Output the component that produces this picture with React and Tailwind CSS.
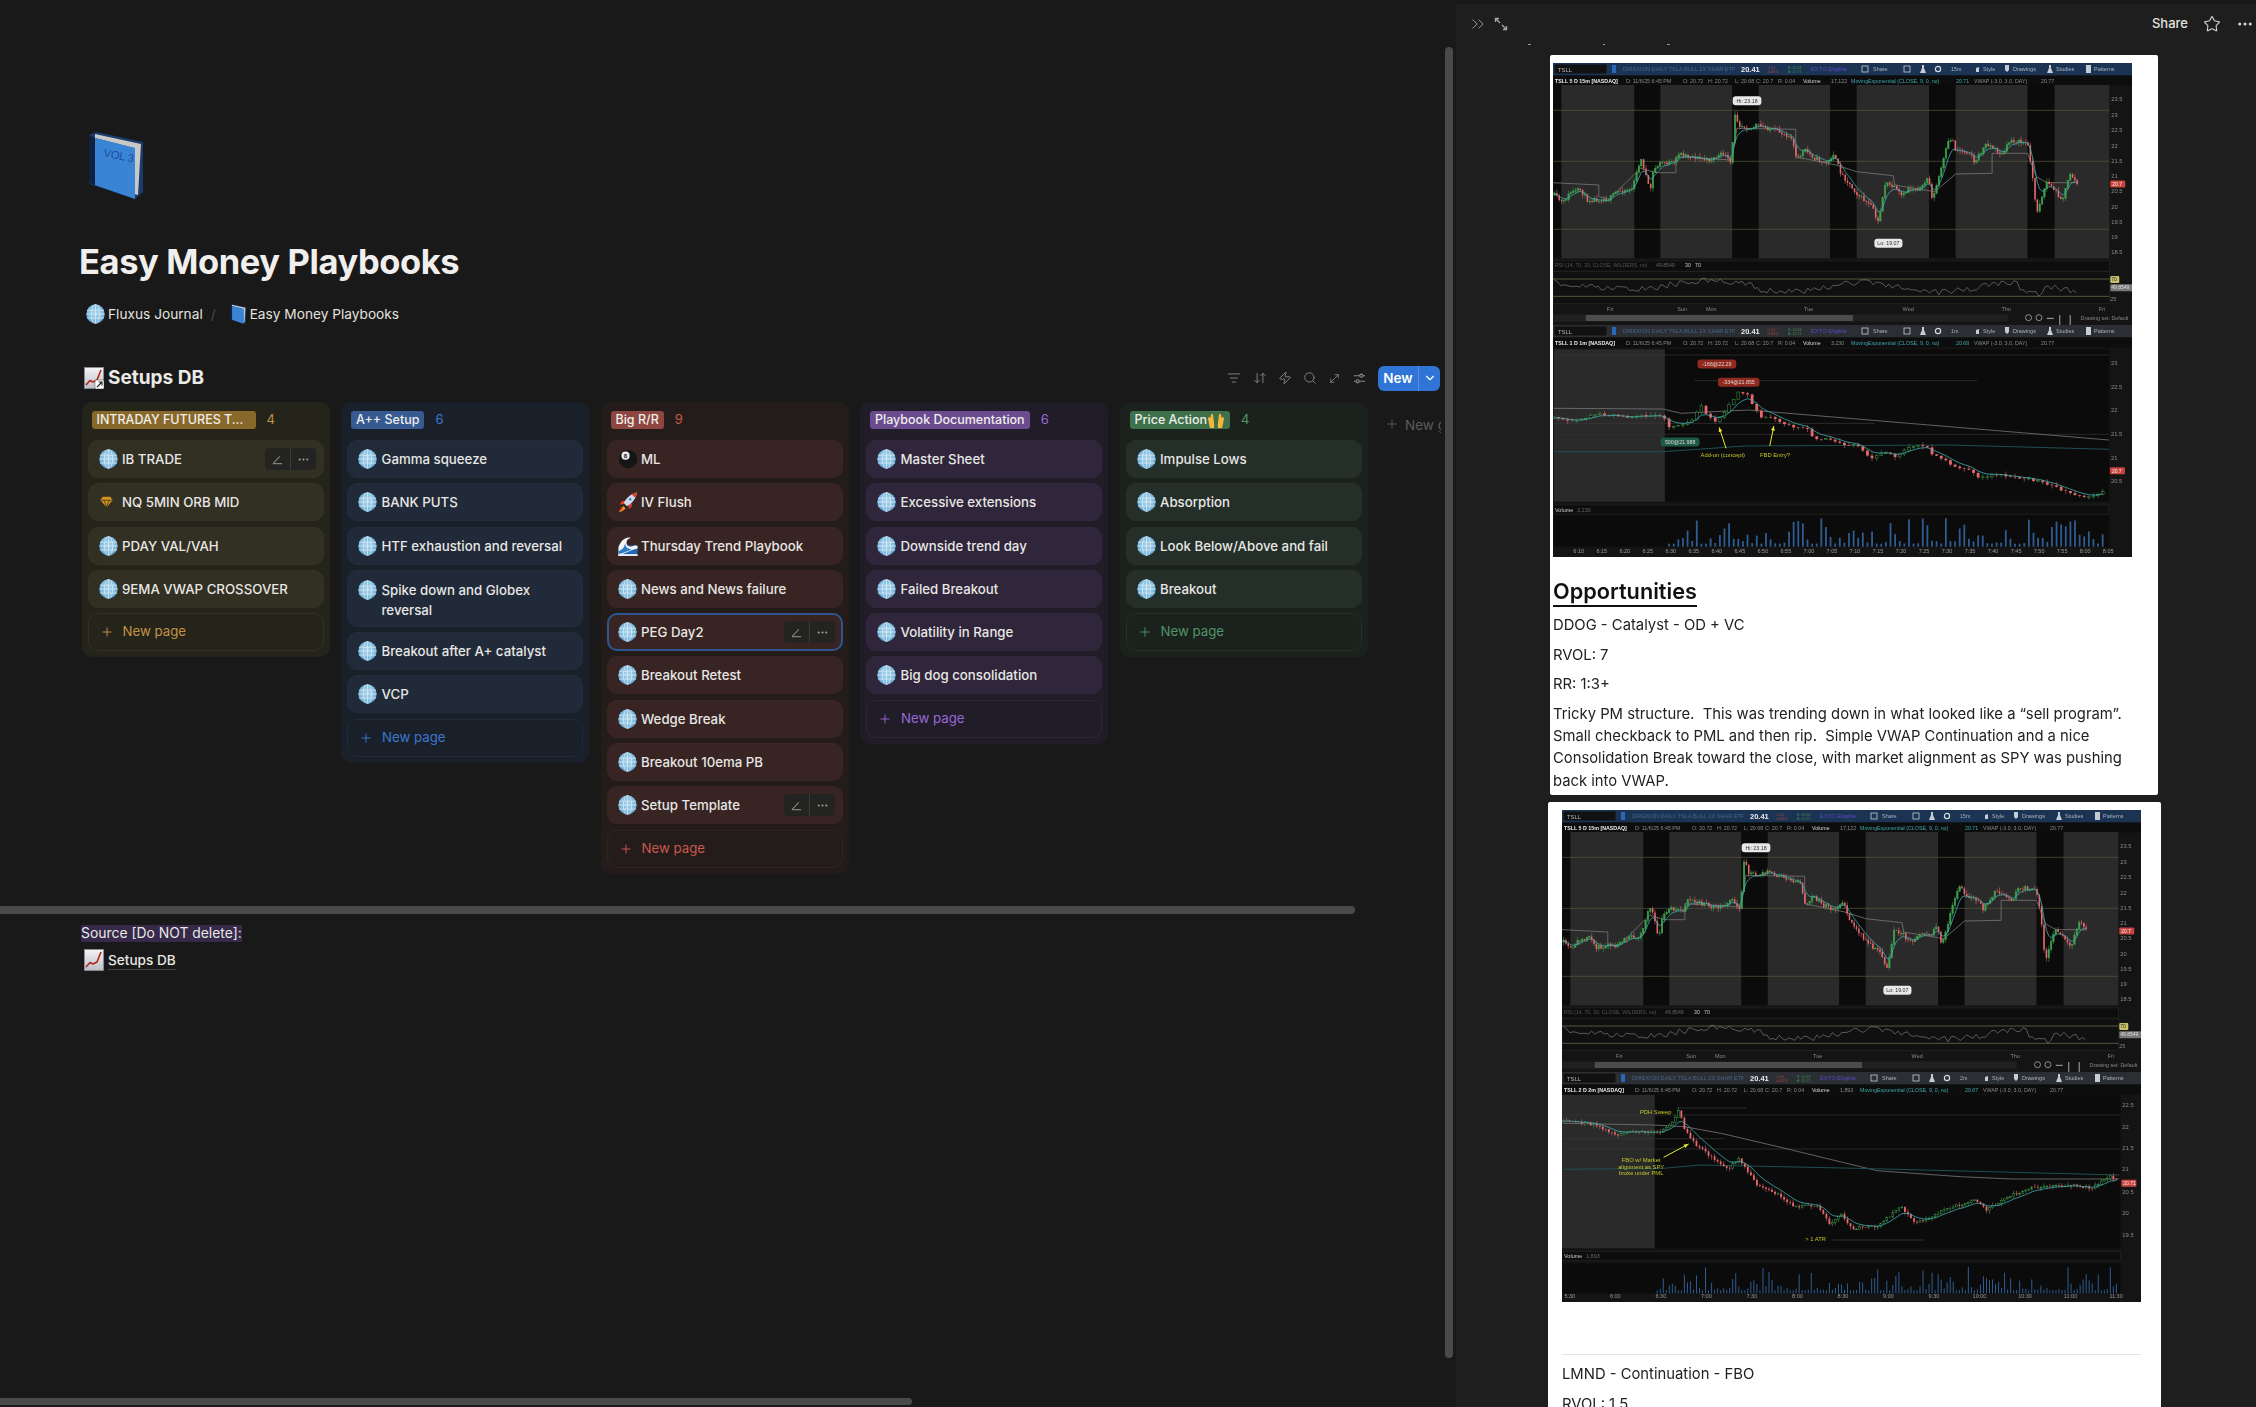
import React from "react";
import { ListFilter, ArrowDownUp, Zap, Search, MoveDiagonal, ChevronDown, ChevronsRight, Star, Ellipsis, Plus } from "lucide-react";

/* ---------- emoji-like drawings ---------- */
const Globe = () => (
  <svg viewBox="0 0 20 21" className="w-[19px] h-[20px] shrink-0">
    <defs>
      <radialGradient id="glb" cx="50%" cy="45%" r="60%">
        <stop offset="0%" stopColor="#a9d4ec" />
        <stop offset="70%" stopColor="#7fbbdf" />
        <stop offset="100%" stopColor="#3f86ba" />
      </radialGradient>
    </defs>
    <ellipse cx="10" cy="10.5" rx="9.7" ry="10.2" fill="url(#glb)" />
    <g fill="none" stroke="#e6f0f5" strokeWidth="0.9" opacity="0.8">
      <ellipse cx="10" cy="10.5" rx="4.4" ry="10" />
      <path d="M10 .5v20M1 6.5h18M.4 10.5h19.2M1 14.8h18" />
    </g>
  </svg>
);

const Book = ({ small }) => (
  <svg viewBox="0 0 55 67" className={small ? "w-[16px] h-[20px] shrink-0" : "w-[55px] h-[67px] shrink-0"}>
    <path d="M1 3 8 0l47 10v50l-8 7L1 52Z" fill="#1b3b6d" />
    <path d="M7 2 53 12 50 63 46 62 46 16 7 6Z" fill="#c8c8c6" />
    <path d="M7 6 47 16v51L7 53Z" fill="#3a84d6" />
    <path d="M1 3 7 6v47L1 51Z" fill="#11203c" />
    {!small && (
      <g fill="#1b4f96" transform="rotate(12 14 24)">
        <text x="15" y="24" fontSize="11" fontFamily="Liberation Sans, sans-serif">VOL 3</text>
      </g>
    )}
  </svg>
);

const ChartEmoji = ({ shortcut }) => (
  <svg viewBox="0 0 20 22" className="w-[20px] h-[22px] shrink-0">
    <defs>
      <linearGradient id="pap" x1="0" y1="0" x2="0" y2="1">
        <stop offset="0%" stopColor="#f4f4f6" />
        <stop offset="100%" stopColor="#bcbfc6" />
      </linearGradient>
    </defs>
    <rect x="0.5" y="0.5" width="19" height="21" fill="url(#pap)" stroke="#8d9098" strokeWidth="0.8" />
    <path d="M2 18 6 13.5 9 15 13 13 17 3" fill="none" stroke="#b3261e" strokeWidth="1.6" strokeLinejoin="round" />
    {shortcut && (
      <g>
        <rect x="11" y="13" width="9" height="9" rx="1.5" fill="#fff" stroke="#444" strokeWidth="0.5" />
        <path d="M13 20 18 15M14.6 15H18v3.4" stroke="#222" strokeWidth="1.1" fill="none" />
      </g>
    )}
  </svg>
);

const EightBall = () => (
  <svg viewBox="0 0 20 21" className="w-[20px] h-[20px] shrink-0">
    <circle cx="10" cy="10.5" r="9.7" fill="#151515" />
    <circle cx="7.4" cy="7" r="4.3" fill="#e9e9e9" />
    <text x="7.4" y="9.4" textAnchor="middle" fontSize="6.4" fontWeight="700" fill="#111" fontFamily="Liberation Sans, sans-serif">8</text>
  </svg>
);

const Rocket = () => (
  <svg viewBox="0 0 20 21" className="w-[20px] h-[20px] shrink-0">
    <path d="M5 15C3 17 1.500 19 .5 21c3-.5 5.500-2 7-4Z" fill="#f6a21c" />
    <path d="M3 16 1 20l4-2Z" fill="#e33d23" />
    <path d="M7 9 3 10 1.500 13 6 12.500ZM11 13.500 10.500 18l3-2 1-4Z" fill="#e23b2c" />
    <path d="M19.500 .5C14 1.500 9 5 5.500 11.500l3.500 3.500C15 11.500 18.500 6.500 19.500 .5Z" fill="#cfd8e6" />
    <path d="M19.500 .5c-2 .3-4 1-5.500 2l3.500 3.500c1-1.800 1.700-3.500 2-5.500Z" fill="#e23b2c" />
    <circle cx="12.300" cy="7.700" r="1.800" fill="#2f7fc4" stroke="#f3f3f3" strokeWidth=".7" />
  </svg>
);

const Wave = () => (
  <svg viewBox="0 0 20 21" className="w-[20px] h-[20px] shrink-0">
    <rect x="0" y="10" width="20" height="11" fill="#1f69b8" />
    <path d="M0 21V12C2 5 8 0 13 2c-3 .5-5 3-4.500 6 .5 3 4 4 7 2.500 1.500-.7 3-.7 4.500 0V13c-6 1.500-9 3-20 8Z" fill="#f2f5f8" />
    <path d="M0 16c4-1 6-4 7-8 .5 4 3 6 7 6-4 2-9 4-14 5Z" fill="#2d7cc8" />
    <path d="M0 19h20v2H0Z" fill="#e9eef4" />
  </svg>
);

const Gem = () => (
  <svg viewBox="0 0 16 14" className="w-[15px] h-[12px] shrink-0">
    <path d="M3.500 .8h9L15.200 5 8 13.200.8 5Z" fill="#cf9122" />
    <path d="M1 5h14M5 5l3 8 3-8" stroke="#33301f" strokeWidth=".8" fill="none" />
  </svg>
);

const Hands = () => (
  <svg viewBox="0 0 18 18" className="w-[18px] h-[18px] shrink-0">
    <path d="M1 7c1-1.500 2-1.500 2.500 0L4 3.500c.5-1 1.500-1 2 0l.5 4 .7 6.500L7 17H3l-1-4Z" fill="#f5b63b" />
    <path d="M17 7c-1-1.500-2-1.500-2.500 0L14 3.500c-.5-1-1.500-1-2 0l-.5 4-.7 6.500.2 3h4l1-4Z" fill="#f5b63b" />
    <path d="M6 1 6.400 0M9 1V0M12 1l-.4-1" stroke="#9a9a8a" strokeWidth=".6" />
  </svg>
);

const ICONS = { globe: Globe, ball: EightBall, rocket: Rocket, wave: Wave, gem: Gem };

/* ---------- board ---------- */
const ActionBox = () => (
  <div className="ml-auto flex h-[22px] w-[51px] rounded-[4px] bg-[#232322] shrink-0">
    <div className="flex flex-1 items-center justify-center border-r border-[#3a3a38]">
      <svg viewBox="0 0 14 12" className="w-[13px] h-[11px]">
        <path d="M2 10.500h10M2 10.500 9.500 2.500" fill="none" stroke="#7f7f7b" strokeWidth="1.200" />
      </svg>
    </div>
    <div className="flex flex-1 items-center justify-center">
      <Ellipsis className="w-[13px] h-[13px] text-[#9c9c98]" strokeWidth={2} />
    </div>
  </div>
);

const COLUMNS = [
  {
    name: "INTRADAY FUTURES T...", count: 4,
    col: "bg-[#25241b]", card: "bg-[#322f23] border-[#343125]", pill: "bg-[#89692b] w-[164px]", accent: "text-[#c29343]", line: "border-[#322f24]",
    items: [["globe", "IB TRADE", "act"], ["gem", "NQ 5MIN ORB MID"], ["globe", "PDAY VAL/VAH"], ["globe", "9EMA VWAP CROSSOVER"]],
  },
  {
    name: "A++ Setup", count: 6,
    col: "bg-[#1a2029]", card: "bg-[#202a39] border-[#222c3b]", pill: "bg-[#365a91]", accent: "text-[#3a77d0]", line: "border-[#202a39]",
    items: [["globe", "Gamma squeeze"], ["globe", "BANK PUTS"], ["globe", "HTF exhaustion and reversal"], ["globe", "Spike down and Globex reversal"], ["globe", "Breakout after A+ catalyst"], ["globe", "VCP"]],
  },
  {
    name: "Big R/R", count: 9,
    col: "bg-[#241c1a]", card: "bg-[#372423] border-[#392625]", pill: "bg-[#8e4740]", accent: "text-[#c9584d]", line: "border-[#332422]",
    items: [["ball", "ML"], ["rocket", "IV Flush"], ["wave", "Thursday Trend Playbook"], ["globe", "News and News failure"], ["globe", "PEG Day2", "act", "sel"], ["globe", "Breakout Retest"], ["globe", "Wedge Break"], ["globe", "Breakout 10ema PB"], ["globe", "Setup Template", "act"]],
  },
  {
    name: "Playbook Documentation", count: 6,
    col: "bg-[#201c28]", card: "bg-[#2f263b] border-[#31283d]", pill: "bg-[#6a4b90]", accent: "text-[#9a68d6]", line: "border-[#2d2539]",
    items: [["globe", "Master Sheet"], ["globe", "Excessive extensions"], ["globe", "Downside trend day"], ["globe", "Failed Breakout"], ["globe", "Volatility in Range"], ["globe", "Big dog consolidation"]],
  },
  {
    name: "Price Action", hands: true, count: 4,
    col: "bg-[#1b211d]", card: "bg-[#252f2a] border-[#27312c]", pill: "bg-[#3e7149]", accent: "text-[#4f9666]", line: "border-[#252e29]",
    items: [["globe", "Impulse Lows"], ["globe", "Absorption"], ["globe", "Look Below/Above and fail"], ["globe", "Breakout"]],
  },
];

const Card = ({ item, c }) => {
  const [icon, label, act, sel] = item;
  const Ic = ICONS[icon];
  const two = label.startsWith("Spike");
  return (
    <div className={`flex ${two ? "h-[57px] items-start pt-[9px]" : "h-[38px] items-center"} rounded-[10px] border ${sel ? "border-[#2f5694] border-2 pl-[9px] pr-[6px]" : `${c.card.split(" ")[1]} pl-[10px] pr-[7px]`} ${c.card.split(" ")[0]}`}>
      <span className="flex w-[23.5px] justify-start shrink-0"><Ic /></span>
      <span className={`text-[13.25px] leading-[20px] font-medium text-[#e8e7e4] ${two ? "pr-[30px]" : "whitespace-nowrap"}`}>{label}</span>
      {act && <ActionBox />}
    </div>
  );
};

const Column = ({ c }) => (
  <div className={`w-[248px] shrink-0 rounded-[10px] px-[6px] pt-[9px] pb-[6px] ${c.col}`}>
    <div className="mb-[11px] flex h-[18px] items-center pl-[4px]">
      <span className={`flex h-[18px] items-center rounded-[3px] px-[5px] text-[12.5px] font-medium leading-[18px] text-[#efeeea] whitespace-nowrap ${c.pill}`}>
        {c.name}{c.hands && <Hands />}
      </span>
      <span className={`ml-[11px] text-[13px] ${c.accent}`}>{c.count}</span>
    </div>
    <div className="flex flex-col gap-[5.3px]">
      {c.items.map((it) => <Card key={it[1]} item={it} c={c} />)}
      <div className={`flex h-[38px] items-center rounded-[10px] border pl-[11px] ${c.line}`}>
        <Plus className={`w-[14px] h-[14px] mr-[9px] ${c.accent}`} strokeWidth={1.6} />
        <span className={`text-[13.25px] ${c.accent}`}>New page</span>
      </div>
    </div>
  </div>
);

const Sliders = () => (
  <svg viewBox="0 0 14 14" className="w-[13px] h-[13px]" fill="none" stroke="#8b8b88" strokeWidth="1.200">
    <path d="M1 4h12M1 10h12" />
    <circle cx="9" cy="4" r="1.700" fill="#191919" />
    <circle cx="5" cy="10" r="1.700" fill="#191919" />
  </svg>
);

/* ---------- trading charts ---------- */
const rng = (seed) => { let s = seed; return () => { s = (s * 16807) % 2147483647; return (s - 1) / 2147483646; }; };
const at = (pts, x) => {
  for (let i = 1; i < pts.length; i++) {
    if (x <= pts[i][0]) {
      const [a, b] = pts[i - 1]; const [c, d] = pts[i];
      return b + ((d - b) * (x - a)) / (c - a || 1);
    }
  }
  return pts[pts.length - 1][1];
};
const mkCandles = (pts, step, seed, noise, wick) => {
  const r = rng(seed); const out = []; let prev = pts[0][1];
  for (let x = pts[0][0]; x <= pts[pts.length - 1][0]; x += step) {
    const c = at(pts, x) + (r() - 0.5) * noise;
    out.push({ x, o: prev, c, h: Math.min(prev, c) - r() * wick, l: Math.max(prev, c) + r() * wick });
    prev = c;
  }
  return out;
};
const poly = (pts, X, Y) => pts.map(([a, b]) => `${X(a).toFixed(1)},${Y(b).toFixed(1)}`).join(" ");

const Toolbar = ({ tone, tf, head, vol, ema, vw }) => (
  <g>
    <rect x="0" y="0" width="579" height="12.500" fill={tone} />
    <rect x="1.500" y="1.500" width="52" height="9" fill="#111" />
    <text x="5" y="8.500" fontSize="5.800" fill="#b5b5b5">TSLL</text>
    <rect x="59" y="2" width="4" height="8" fill="#2a67b8" />
    <text x="70" y="8.300" fontSize="5.600" fill="#476488">DIREXION DAILY TSLA BULL 2X SHAR ETF</text>
    <text x="188" y="9" fontSize="7.500" fontWeight="700" fill="#eee">20.41</text>
    <text x="214" y="5.500" fontSize="3.600" fill="#b4443f">-1.51</text>
    <text x="214" y="10" fontSize="3.600" fill="#b4443f">-6.85%</text>
    <text x="235" y="5.500" fontSize="3.600" fill="#3d8d4a">B: 20.64</text>
    <text x="235" y="10" fontSize="3.600" fill="#3d8d4a">A: 20.71</text>
    <text x="258" y="8.300" fontSize="5.800" fill="#5a48c8">EXTO Eligible</text>
    <text x="320" y="8.300" fontSize="5.500" fill="#a9b3bf">Share</text>
    <rect x="309" y="3" width="6" height="6" fill="none" stroke="#c5ccd4" strokeWidth=".8" />
    <rect x="351" y="3" width="6" height="6" fill="none" stroke="#c5ccd4" strokeWidth=".8" />
    <path d="M369 2h2v3l2 5h-6l2-5Z" fill="#c5ccd4" />
    <circle cx="385" cy="6" r="2.600" fill="none" stroke="#d5dae0" strokeWidth="1.200" />
    <text x="398" y="8.300" fontSize="5.300" fill="#a9b3bf">{tf}</text>
    <text x="430" y="8.300" fontSize="5.500" fill="#a9b3bf">Style</text>
    <text x="460" y="8.300" fontSize="5.500" fill="#a9b3bf">Drawings</text>
    <text x="503" y="8.300" fontSize="5.500" fill="#a9b3bf">Studies</text>
    <text x="541" y="8.300" fontSize="5.500" fill="#a9b3bf">Patterns</text>
    <path d="M423 9v-4l3-1v5ZM452 2v5l2 2 2-2V2ZM496 2h2v3l2 5h-6l2-5ZM533 2h5v8h-5Z" fill="#c5ccd4" />
    <rect x="0" y="12.500" width="579" height="10" fill="#0d0d0d" />
    <g fontSize="5.300" fill="#8a8a8a">
      <text x="2" y="20" fontWeight="700" fill="#eaeaea">{head}</text>
      <text x="73" y="20">D: 11/6/25 6:45 PM</text>
      <text x="130" y="20">O: 20.72</text>
      <text x="155" y="20">H: 20.72</text>
      <text x="182" y="20">L: 20.68</text>
      <text x="203" y="20">C: 20.7</text>
      <text x="225" y="20">R: 0.04</text>
      <text x="250" y="20" fill="#d8d8d8">Volume</text>
      <text x="278" y="20">{vol}</text>
      <text x="298" y="20" fill="#3fa8ad">MovingExponential (CLOSE, 9, 0, no)</text>
      <text x="403" y="20" fill="#3fa8ad">{ema}</text>
      <text x="421" y="20">VWAP (-3.0, 3.0, DAY)</text>
      <text x="488" y="20">{vw}</text>
    </g>
  </g>
);

const Chart = ({ c }) => {
  const X = (z) => (z - c.x0) / c.kx;
  const Y = (z) => (z - c.y0) / 3;
  const P = c.plot;
  const candles = mkCandles(c.path, c.step, c.seed, c.noise, c.wick);
  let e = c.path[0][1];
  const emaPts = candles.map((k) => { e += c.emaK * (k.c - e); return [k.x, e]; });
  const bw = c.bodyW;
  const r = rng(c.seed + 7);
  return (
    <svg viewBox={`0 0 579 ${c.h}`} className="block w-[579px] blur-[0.45px] font-['Liberation_Sans']" style={{ height: c.h }}>
      <rect x="0" y="0" width="579" height={c.h} fill="#141414" />
      <Toolbar tone={c.tone} tf={c.tf} head={c.head} vol={c.vol} ema={c.ema} vw="20.77" />
      <rect x={X(P.l)} y={Y(P.t)} width={X(P.r) - X(P.l)} height={Y(P.b) - Y(P.t)} fill={c.plotBg} />
      {c.shade && <rect x={X(c.shade[0])} y={Y(P.t)} width={X(c.shade[1]) - X(c.shade[0])} height={Y(P.b) - Y(P.t)} fill={c.shadeFill} />}
      {(c.bands || []).map(([a, b]) => <rect key={a} x={X(a)} y={Y(P.t)} width={X(b) - X(a)} height={Y(P.b) - Y(P.t)} fill="#0b0b0b" />)}
      {c.hlines.map(([a, b, y, col]) => <line key={`${a}${y}`} x1={X(a)} x2={X(b)} y1={Y(y)} y2={Y(y)} stroke={col} strokeWidth=".7" />)}
      <polyline points={poly(c.vwap, X, Y)} fill="none" stroke="#77777a" strokeWidth=".8" />
      {c.teal && <polyline points={poly(c.teal, X, Y)} fill="none" stroke="#1f4f52" strokeWidth="1" />}
      {candles.map((k) => {
        const down = k.c > k.o;
        const col = down ? "#e66a6c" : "#3f9f4c";
        const top = Math.min(k.o, k.c);
        const ht = Math.max(Math.abs(k.c - k.o) / 3, 0.5);
        return (
          <g key={k.x}>
            <line x1={X(k.x)} x2={X(k.x)} y1={Y(k.h)} y2={Y(k.l)} stroke={col} strokeWidth=".55" />
            <rect x={X(k.x) - bw / 2} y={Y(top)} width={bw} height={ht} fill={down || !c.hollow ? col : "#0a0a0a"} stroke={down ? "none" : col} strokeWidth=".5" />
          </g>
        );
      })}
      <polyline points={poly(emaPts, X, Y)} fill="none" stroke="#43a9b0" strokeWidth=".8" />
      <g fontSize="5.800" fill="#8b8b8b">
        {c.ylabels.map(([t, y]) => <text key={t} x={X(P.r) + 2} y={Y(y) + 2}>{t}</text>)}
      </g>
      {c.priceBadges.map(([t, y, bg]) => (
        <g key={t}>
          <rect x={X(P.r) + 1} y={Y(y) - 3.500} width="15" height="7" rx="1" fill={bg} />
          <text x={X(P.r) + 3} y={Y(y) + 2} fontSize="5" fill="#eee">{t}</text>
        </g>
      ))}
      {c.badges.map(([t, a, b, y, bg]) => (
        <g key={t}>
          <rect x={X(a)} y={Y(y) - 4.500} width={X(b) - X(a)} height="9" rx="3" fill={bg} />
          <text x={(X(a) + X(b)) / 2} y={Y(y) + 2} textAnchor="middle" fontSize="5.300" fill={c.badgeText}>{t}</text>
        </g>
      ))}
      {c.notes.map(([t, x, y]) => <text key={t} x={X(x)} y={Y(y)} textAnchor="middle" fontSize="5.800" fill="#c5c52a">{t}</text>)}
      {c.arrows.map(([a, b, d, f], i) => {
        const x2 = X(d), y2 = Y(f), x1 = X(a), y1 = Y(b);
        const ang = Math.atan2(y2 - y1, x2 - x1);
        const p = (o) => `${(x2 + 5 * Math.cos(ang + o)).toFixed(1)},${(y2 + 5 * Math.sin(ang + o)).toFixed(1)}`;
        return (
          <g key={i}>
            <line x1={x1} y1={y1} x2={x2} y2={y2} stroke="#e6e62e" strokeWidth="1" />
            <polygon points={`${x2},${y2} ${p(Math.PI * 0.87)} ${p(-Math.PI * 0.87)}`} fill="#e6e62e" />
          </g>
        );
      })}
      {c.kind === "rsi" && (() => {
        const pts = []; const rr = rng(41);
        for (let z = 220; z < 1225; z += 6) pts.push([z, 862 + Math.sin(z / 47) * 14 + (rr() - 0.5) * 18 - (z > 320 && z < 600 ? 8 : 0) + (z > 1110 && z < 1160 ? 30 : 0)]);
        return (
          <g>
            <rect x={X(217)} y={Y(783)} width={X(1285) - X(217)} height={Y(813) - Y(783)} fill="#0d0d0d" stroke="#2b2b2b" strokeWidth=".5" />
            <text x="2" y={Y(800)} fontSize="5.200" fill="#555">RSI (14, 70, 30, CLOSE, WILDERS, no)</text>
            <text x="103" y={Y(800)} fontSize="5.200" fill="#666">49.8549</text>
            <text x="132" y={Y(800)} fontSize="5.200" fill="#ccc">30</text>
            <text x="142" y={Y(800)} fontSize="5.200" fill="#ccc">70</text>
            <rect x={X(217)} y={Y(815)} width={X(1285) - X(217)} height={Y(910) - Y(815)} fill="#101010" stroke="#2b2b2b" strokeWidth=".5" />
            <line x1={X(217)} x2={X(1285)} y1={Y(837)} y2={Y(837)} stroke="#77774a" strokeWidth=".7" />
            <line x1={X(217)} x2={X(1285)} y1={Y(889)} y2={Y(889)} stroke="#77774a" strokeWidth=".7" />
            <polyline points={poly(pts, X, Y)} fill="none" stroke="#8a8a8a" strokeWidth=".6" />
            <rect x={X(1287)} y={Y(828)} width="9" height="7" rx="1" fill="#c9c26a" />
            <text x={X(1289)} y={Y(843)} fontSize="5" fill="#222">70</text>
            <rect x={X(1287)} y={Y(853)} width="22" height="7" rx="1" fill="#777" />
            <text x={X(1289)} y={Y(868)} fontSize="5" fill="#ddd">49.8549</text>
            <text x={X(1287)} y={Y(902)} fontSize="5.500" fill="#888">25</text>
            <g fontSize="5.500" fill="#888" textAnchor="middle">
              {[["Fri", 327], ["Sun", 465], ["Mon", 521], ["Tue", 708], ["Wed", 899], ["Thu", 1087], ["Fri ", 1271]].map(([t, z]) => <text key={t} x={X(z)} y={Y(932)}>{t}</text>)}
            </g>
            <rect x={X(217)} y={Y(943)} width={X(1090) - X(217)} height={Y(965) - Y(943)} fill="#202020" />
            <rect x={X(280)} y={Y(945)} width={X(793) - X(280)} height={Y(963) - Y(945)} fill="#4c4c4c" />
            <circle cx={X(1130)} cy={Y(953)} r="3" fill="none" stroke="#aaa" strokeWidth=".8" />
            <circle cx={X(1150)} cy={Y(953)} r="3" fill="none" stroke="#aaa" strokeWidth=".8" />
            <path d={`M${X(1165)} ${Y(955)}h7M${X(1190)} ${Y(945)}v20M${X(1210)} ${Y(945)}v18`} stroke="#aaa" strokeWidth="1" />
            <text x={X(1230)} y={Y(961)} fontSize="5.300" fill="#888">Drawing set: Default</text>
          </g>
        );
      })()}
      {c.kind === "vol" && (
        <g>
          <rect x={X(P.l)} y={Y(c.volHead)} width={X(P.r) - X(P.l)} height="9" fill="#0d0d0d" stroke="#2b2b2b" strokeWidth=".5" />
          <text x="2" y={Y(c.volHead) + 6.500} fontSize="5.500" fill="#c8c8c8">Volume</text>
          <text x="24" y={Y(c.volHead) + 6.500} fontSize="5.500" fill="#666">{c.volVal}</text>
          <rect x={X(P.l)} y={Y(c.volTop)} width={X(P.r) - X(P.l)} height={Y(c.volBot) - Y(c.volTop)} fill="#0b0b0b" />
          {candles.filter((k) => k.x >= c.volStart).map((k) => {
            const hh = (3 + Math.pow(r(), c.volPow) * 26);
            return <rect key={k.x} x={X(k.x) - c.volW / 2} y={Y(c.volBot) - hh} width={c.volW} height={hh} fill="#2f5d92" />;
          })}
          <g fontSize="5.500" fill="#9a9a9a" textAnchor="middle">
            {c.xlabels.map(([t, z]) => <text key={t} x={X(z)} y={c.h - 4}>{t}</text>)}
          </g>
        </g>
      )}
    </svg>
  );
};

const chartA = (seed, head) => ({
  kind: "rsi", x0: 217, y0: 189, kx: 1.92, h: 262, tone: "#1c3453", tf: "15m", head, vol: "17,122", ema: "20.71",
  plot: { l: 217, r: 1285, t: 255, b: 775 }, plotBg: "#2a2a2a",
  bands: [[217, 233], [373, 423], [561, 612], [749, 800], [939, 990], [1128, 1180]],
  hlines: [[217, 1285, 331, "#56563f"], [217, 1285, 484, "#56563f"], [217, 1285, 688, "#56563f"]],
  path: [[220,585],[236,610],[250,578],[270,570],[283,600],[325,597],[340,575],[370,565],[385,475],[393,510],[403,578],[410,510],[425,487],[450,490],[458,460],[480,468],[515,482],[545,460],[560,495],[565,335],[575,375],[600,385],[607,375],[640,390],[675,410],[685,480],[700,450],[720,475],[745,490],[755,460],[770,520],[800,580],[835,630],[838,685],[845,635],[855,550],[870,560],[888,590],[900,565],[925,565],[937,530],[946,600],[960,520],[975,430],[983,412],[990,450],[1020,458],[1025,490],[1050,430],[1080,465],[1095,420],[1128,430],[1135,490],[1145,640],[1165,545],[1185,580],[1195,600],[1210,520],[1225,555]],
  step: 4.500, seed, noise: 12, wick: 12, bodyW: 1.500, emaK: 0.3,
  vwap: [[217,548],[305,555],[305,590],[325,597],[385,505],[415,518],[453,518],[453,470],[560,480],[570,385],[683,388],[683,470],[760,495],[800,515],[870,527],[873,555],[950,575],[990,522],[1060,520],[1060,460],[1128,460],[1145,530],[1165,548],[1220,548]],
  ylabels: [["23.5",298],["23",344],["22.5",390],["22",437],["21.5",483],["21",528],["20.5",574],["20",620],["19.5",665],["19",711],["18.5",757]],
  priceBadges: [["20.7", 552, "#c9443f"]],
  badges: [["Hi: 23.18", 562, 617, 302, "#e8e8e8"], ["Lo: 19.07", 834, 888, 730, "#e8e8e8"]],
  badgeText: "#333", notes: [], arrows: [],
});

const chartB = {
  kind: "vol", x0: 31, y0: 15, kx: 2.450, h: 232, tone: "#2b2e33", tf: "1m", head: "TSLL 1 D 1m [NASDAQ]", vol: "3,230", ema: "20.69",
  plot: { l: 33, r: 1393, t: 88, b: 545 }, plotBg: "#0b0b0b", shade: [33, 305], shadeFill: "#2a2a2a",
  hlines: [[33,1393,105,"#333"],[33,820,310,"#3a3a3a"],[33,1393,343,"#333"],[378,1070,182,"#3a3a3a"]],
  path: [[33,295],[90,300],[140,283],[220,290],[300,285],[312,320],[340,315],[370,300],[395,255],[412,290],[430,310],[455,270],[485,220],[503,215],[520,255],[545,295],[570,290],[585,305],[620,320],[650,320],[675,360],[710,355],[750,380],[775,370],[790,395],[810,415],[850,395],[870,410],[905,380],[940,375],[960,400],[1010,435],[1060,455],[1070,470],[1140,465],[1240,490],[1310,525],[1340,530],[1385,512]],
  step: 11.300, seed: 77, noise: 8, wick: 10, bodyW: 2.800, emaK: 0.3, hollow: true,
  vwap: [[33,265],[300,267],[345,280],[510,270],[1100,330],[1393,360]],
  teal: [[33,395],[300,395],[500,378],[1000,375],[1393,388]],
  ylabels: [["23",130],["22.5",200],["22",271],["21.5",342],["21",413],["20.5",484]],
  priceBadges: [["20.7", 452, "#c9443f"]],
  badges: [["-166@22.29", 385, 480, 132, "#8f2a20"], ["-334@21.855", 435, 537, 187, "#8f2a20"], ["500@21.988", 295, 390, 366, "#1c5a45"]],
  badgeText: "#e0d5d0",
  notes: [["Add-on (concept)", 447, 410], ["FBD Entry?", 575, 410]],
  arrows: [[455, 385, 438, 322], [562, 378, 572, 318]],
  volHead: 555, volVal: "3,230", volTop: 585, volBot: 680, volStart: 312, volW: 1.800, volPow: 2.4,
  xlabels: Array.from({ length: 24 }, (_, i) => { const m = 370 + i * 5; return [`${Math.floor(m / 60)}:${String(m % 60).padStart(2, "0")}`, 94 + i * 56.400]; }),
};

const chartD = {
  kind: "vol", x0: 235, y0: -84, kx: 1.920, h: 230, tone: "#2b2e33", tf: "2m", head: "TSLL 2 D 2m [NASDAQ]", vol: "1,893", ema: "20.67",
  plot: { l: 235, r: 1307, t: -15, b: 445 }, plotBg: "#0b0b0b", shade: [235, 413], shadeFill: "#2a2a2a",
  hlines: [[235,1307,45,"#333"],[235,545,116,"#3a3a3a"],[235,1307,147,"#333"],[755,930,420,"#444"],[455,590,24,"#3a3a3a"]],
  path: [[238,65],[285,68],[340,105],[375,92],[415,100],[430,90],[445,75],[460,30],[470,90],[490,130],[520,170],[555,205],[575,175],[610,255],[650,285],[680,320],[725,315],[750,375],[770,340],[790,385],[840,380],[885,320],[912,365],[935,360],[975,325],[1030,300],[1050,330],[1100,285],[1140,262],[1215,255],[1250,265],[1285,230],[1305,238]],
  step: 5.800, seed: 133, noise: 8, wick: 10, bodyW: 1.800, emaK: 0.22, hollow: true,
  vwap: [[238,70],[410,75],[470,80],[540,100],[650,140],[840,212],[1000,230],[1100,237],[1305,237]],
  teal: [[238,208],[430,205],[500,195],[800,205],[1305,225]],
  ylabels: [["22.5",15],["22",80],["21.5",145],["21",208],["20.5",277],["20",340],["19.5",405]],
  priceBadges: [["20.71", 250, "#c9443f"]],
  badges: [], badgeText: "#fff",
  notes: [["PDH Sweep", 415, 43], ["FBO w/ Market", 387, 186], ["alignment as SPY", 387, 206], ["broke under PML", 387, 226], ["> 1 ATR", 722, 423]],
  arrows: [[430, 172, 478, 132]],
  volHead: 455, volVal: "1,893", volTop: 490, volBot: 580, volStart: 415, volW: 1, volPow: 3.2,
  xlabels: Array.from({ length: 13 }, (_, i) => { const m = 330 + i * 30; return [`${Math.floor(m / 60)}:${String(m % 60).padStart(2, "0")}`, 250 + i * 87.400]; }),
};

/* ---------- page ---------- */
export default function App() {
  return (
    <div className="flex h-[1407px] w-[2256px] overflow-hidden bg-[#191919] font-['Inter',sans-serif] text-[#e8e7e4]">
      {/* left page */}
      <div className="relative h-full w-[1456px] shrink-0 overflow-hidden">
        <div className="pt-[132px] pl-[88px]"><Book /></div>
        <h1 className="mt-[36.5px] pl-[79px] text-[34.5px] leading-[52px] font-bold tracking-[-0.4px] text-[#f0efed]">Easy Money Playbooks</h1>
        <div className="mt-[14.5px] flex h-[24px] items-center pl-[86px] text-[13.7px] text-[#e3e2df]">
          <Globe />
          <span className="ml-[3px]">Fluxus Journal</span>
          <span className="ml-[8px] mr-[14px] text-[#4a4a48]">/</span>
          <Book small />
          <span className="ml-[4px]">Easy Money Playbooks</span>
        </div>
        <div className="mt-[39.5px] flex h-[25px] items-center pl-[84px] pr-[16px]">
          <ChartEmoji shortcut />
          <span className="ml-[4px] text-[19px] font-bold text-[#ebeae7]">Setups DB</span>
          <div className="ml-auto flex items-center text-[#8b8b88]">
            <ListFilter className="mr-[12px] h-[14px] w-[14px]" strokeWidth={1.500} />
            <ArrowDownUp className="mr-[11px] h-[14px] w-[14px]" strokeWidth={1.500} />
            <Zap className="mr-[11px] h-[14px] w-[14px]" strokeWidth={1.500} />
            <Search className="mr-[11px] h-[14px] w-[14px]" strokeWidth={1.500} />
            <MoveDiagonal className="mr-[12px] h-[13px] w-[13px]" strokeWidth={1.500} />
            <span className="mr-[12px] flex"><Sliders /></span>
            <div className="flex h-[25px] w-[62px] items-center rounded-[6px] bg-[#2f74d6] text-white">
              <span className="flex h-full w-[41px] items-center justify-center border-r border-[#5a8fdd] text-[13.5px] font-semibold">New</span>
              <span className="flex flex-1 items-center justify-center"><ChevronDown className="h-[14px] w-[14px]" strokeWidth={2} /></span>
            </div>
          </div>
        </div>
        <div className="mt-[11.5px] flex h-[490px] w-[1441px] gap-[11.5px] overflow-hidden pl-[81.5px]">
          {COLUMNS.map((c) => <div key={c.name} className="shrink-0"><Column c={c} /></div>)}
          <div className="flex shrink-0 items-start pt-[13px] pl-[6px] text-[13.5px] text-[#5c5c5a] whitespace-nowrap">
            <Plus className="mr-[6px] mt-[2px] h-[14px] w-[14px]" strokeWidth={1.500} />New group
          </div>
        </div>
        <div className="mt-[28px] pl-[81px]">
          <span className="inline-block h-[17px] bg-[#37294a] text-[13.9px] leading-[17px] text-[#e8e7e4]">Source [Do NOT delete]:</span>
        </div>
        <div className="mt-[5px] flex h-[22px] items-center pl-[84px]">
          <ChartEmoji />
          <span className="ml-[4px] border-b border-[#444] text-[13.6px] leading-[18px] font-medium">Setups DB</span>
        </div>
        {/* overlay scrollbars */}
        <div className="absolute left-0 top-[906px] h-[8px] w-[1355px] rounded-r-full bg-[#4a4a4a]" />
        <div className="absolute left-0 top-[1398px] h-[7px] w-[912px] rounded-r-full bg-[#4a4a4a]" />
        <div className="absolute left-[1445px] top-[47px] h-[1311px] w-[8px] rounded-full bg-[#4a4a4a]" />
      </div>

      {/* right peek */}
      <div className="mt-[4px] h-[1403px] flex-1 overflow-hidden bg-[#1e1e1e]">
        <div className="flex h-[40px] items-center pl-[12px] pr-[2px] text-[#8b8b88]">
          <ChevronsRight className="h-[20px] w-[20px] text-[#999996]" strokeWidth={1.200} />
          <svg viewBox="0 0 14 14" className="ml-[6px] h-[14px] w-[14px]" fill="none" stroke="#a8a8a5" strokeWidth="1.300">
            <path d="M1.500 1.500 6 6M1.500 5V1.500H5M12.500 12.500 8 8M12.500 9v3.500H9" />
          </svg>
          <span className="ml-auto text-[13px] font-medium text-[#e3e2df]">Share</span>
          <Star className="ml-[15px] h-[18px] w-[18px] text-[#d8d7d4]" strokeWidth={1.400} />
          <Ellipsis className="ml-[15px] h-[18px] w-[18px] text-[#d8d7d4]" strokeWidth={2} />
        </div>
        <div className="ml-[72px] flex h-[1px] gap-[72px]">
          <span className="h-[1px] w-[3px] bg-[#999]" /><span className="h-[1px] w-[2px] bg-[#999]" /><span className="ml-[-10px] h-[1px] w-[3px] bg-[#999]" />
        </div>
        <div className="mt-[10px] ml-[94px] h-[740px] w-[608px] overflow-hidden rounded-[2px] bg-white pt-[8px] pl-[3px] text-[#222]">
          <Chart c={chartA(11, "TSLL 5 D 15m [NASDAQ]")} />
          <Chart c={chartB} />
          <div className="blur-[0.3px]">
            <h2 className="mt-[20px] inline-block border-b-2 border-[#111] text-[21.7px] leading-[28px] font-semibold text-[#111]">Opportunities</h2>
            <p className="mt-[7px] text-[14.8px] leading-[22px]">DDOG - Catalyst - OD + VC</p>
            <p className="mt-[7.5px] text-[14.8px] leading-[22px]">RVOL: 7</p>
            <p className="mt-[7.5px] text-[14.8px] leading-[22px]">RR: 1:3+</p>
            <p className="mt-[7.5px] w-[590px] whitespace-pre-wrap text-[14.8px] leading-[22.4px]">{"Tricky PM structure.  This was trending down in what looked like a “sell program”. Small checkback to PML and then rip.  Simple VWAP Continuation and a nice Consolidation Break toward the close, with market alignment as SPY was pushing back into VWAP."}</p>
          </div>
        </div>
        <div className="mt-[7px] ml-[92px] w-[613px] rounded-[2px] bg-white pt-[8px] pl-[14px] pr-[20px] text-[#222]">
          <Chart c={chartA(29, "TSLL 5 D 15m [NASDAQ]")} />
          <Chart c={chartD} />
          <div className="mt-[52px] h-[1px] bg-[#e4e4e4] blur-[0.3px]" />
          <div className="blur-[0.3px]">
            <p className="mt-[8px] text-[14.8px] leading-[22px]">LMND - Continuation - FBO</p>
            <p className="mt-[8px] text-[14.8px] leading-[22px]">RVOL: 1.5</p>
          </div>
        </div>
      </div>
    </div>
  );
}
